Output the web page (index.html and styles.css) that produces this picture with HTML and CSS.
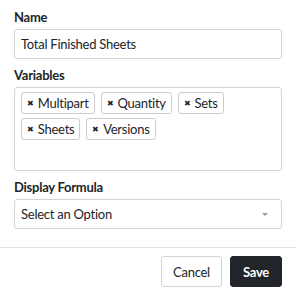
FILE: index.html
```html
<!DOCTYPE html>
<html lang="en">
<head>
    <meta charset="UTF-8">
    <meta name="viewport" content="width=device-width, initial-scale=1.0">
    <title>Edit Variable</title>
    <link rel="stylesheet" href="styles.css">
</head>
<body>
    <div class="modal-body">
        <div class="field">
            <label class="field-label">Name</label>
            <div class="text-input">Total Finished Sheets</div>
        </div>
        <div class="field">
            <label class="field-label">Variables</label>
            <div class="tag-box">
                <span class="tag"><span class="tag-x">&#x2716;</span>Multipart</span>
                <span class="tag"><span class="tag-x">&#x2716;</span>Quantity</span>
                <span class="tag"><span class="tag-x">&#x2716;</span>Sets</span>
                <span class="tag"><span class="tag-x">&#x2716;</span>Sheets</span>
                <span class="tag"><span class="tag-x">&#x2716;</span>Versions</span>
            </div>
        </div>
        <div class="field">
            <label class="field-label">Display Formula</label>
            <div class="select-input">
                <span>Select an Option</span>
                <span class="caret"></span>
            </div>
        </div>
    </div>
    <div class="modal-footer">
        <button class="btn btn-cancel">Cancel</button>
        <button class="btn btn-save">Save</button>
    </div>
</body>
</html>
```

FILE: styles.css
```css
body {
    margin: 0;
    font-family: "Lato", "Noto Sans", sans-serif;
    color: #212529;
    background: #fff;
    letter-spacing: -0.25px;
}

.modal-body {
    padding: 8px 14px 18px;
    display: flex;
    flex-direction: column;
    gap: 7px;
}

.field {
    display: flex;
    flex-direction: column;
}

.field-label {
    font-weight: bold;
    font-size: 13px;
    line-height: 19px;
    margin-bottom: 2px;
}

.text-input, .select-input {
    height: 30px;
    box-sizing: border-box;
    border: 1px solid #ced4da;
    border-radius: 3px;
    padding: 0 6px;
    font-size: 13px;
    display: flex;
    align-items: center;
}

.tag-box {
    height: 84px;
    box-sizing: border-box;
    border: 1px solid #ced4da;
    border-radius: 3px;
    padding: 4px 6px;
    display: flex;
    flex-wrap: wrap;
    align-content: flex-start;
    gap: 4px 6px;
}

.tag {
    height: 22px;
    box-sizing: border-box;
    border: 1px solid #ccc;
    border-radius: 3px;
    padding: 0 5px;
    font-size: 13px;
    display: flex;
    align-items: center;
}

.tag-x {
    font-size: 7.5px;
    margin-right: 4px;
}

.select-input {
    justify-content: space-between;
    padding-right: 13px;
}

.caret {
    width: 0;
    height: 0;
    border-left: 3px solid transparent;
    border-right: 3px solid transparent;
    border-top: 3px solid #999;
}

.modal-footer {
    border-top: 1px solid #dee2e6;
    padding: 8px 14px;
    display: flex;
    justify-content: flex-end;
    gap: 8px;
}

.btn {
    height: 31px;
    font-family: inherit;
    letter-spacing: inherit;
    font-size: 13px;
    border-radius: 3px;
    padding: 0 11px;
    cursor: pointer;
}

.btn-cancel {
    background: #fff;
    border: 1px solid #ced4da;
    color: #212529;
}

.btn-save {
    background: #212529;
    border: 1px solid #212529;
    color: #fff;
    font-weight: bold;
    padding: 0 12px;
}
```
